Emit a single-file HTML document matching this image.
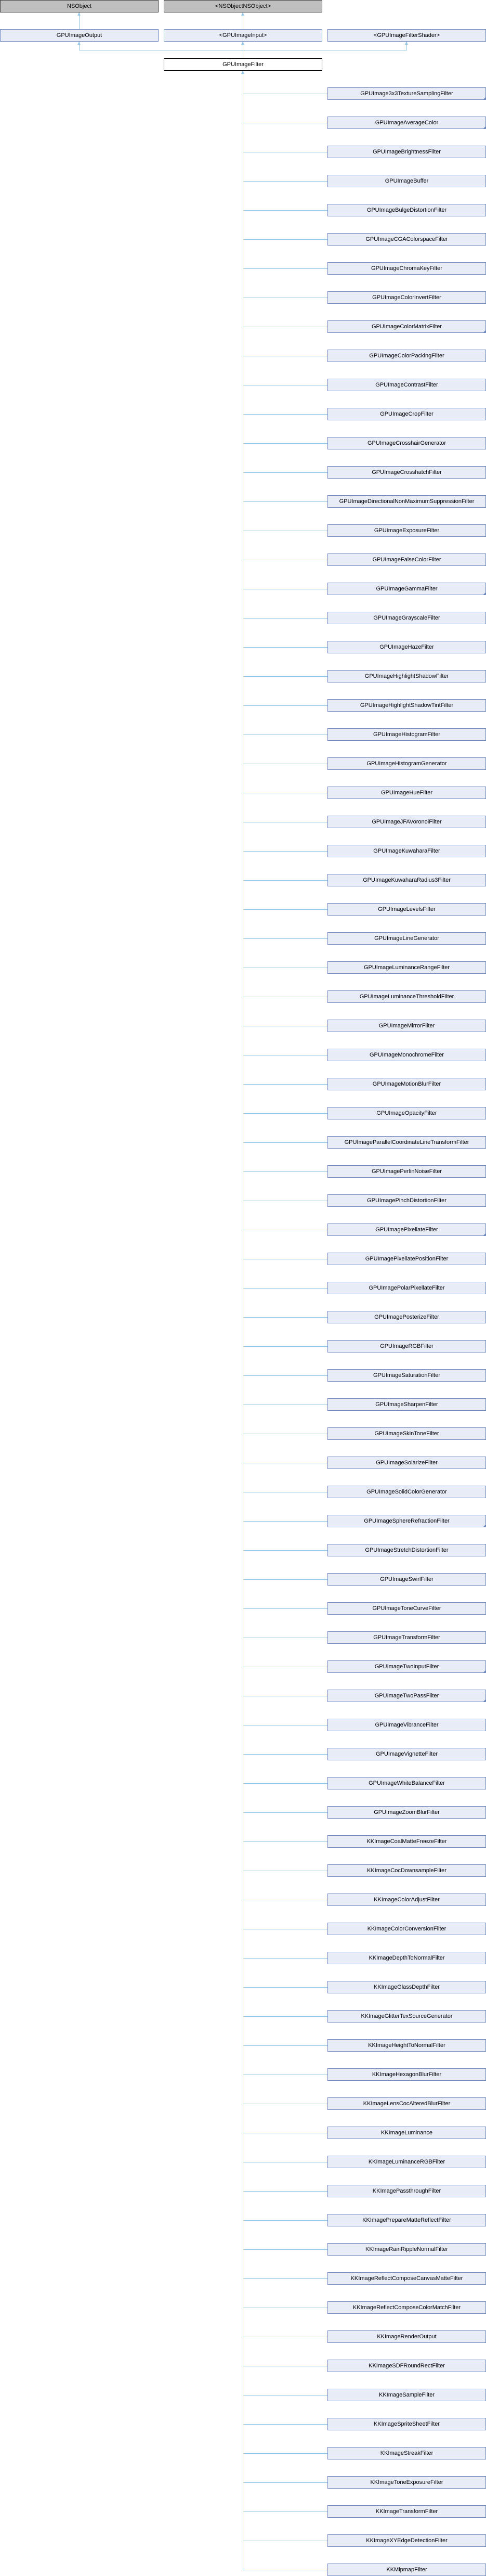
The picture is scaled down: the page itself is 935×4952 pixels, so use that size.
<!DOCTYPE html>
<html><head><meta charset="utf-8"><style>
*{margin:0;padding:0;box-sizing:border-box}
body{width:935px;height:4952px;background:#fff;position:relative;overflow:hidden;font-family:"Liberation Sans",Arial,sans-serif;font-size:11px}
.b{position:absolute;height:24px;line-height:22px;text-align:center;white-space:nowrap;color:#000}
.g{background:#bfbfbf;border:1px solid #404040}
.u{background:#e8ecf6;border:1px solid #7089c0}
.w{background:#fff;border:1px solid #000}
.c{position:absolute;left:630px;width:305px;height:24px;line-height:22px;text-align:center;background:#e8ecf6;border:1px solid #7089c0;white-space:nowrap}
.c::before{content:"";position:absolute;left:-163px;top:11px;width:162px;height:1px;background:#94c6e6}
.f::after{content:"";position:absolute;right:-1px;bottom:-1px;border-left:6px solid transparent;border-bottom:6px solid #7089c0}
.l{position:absolute;background:#94c6e6}
.a{position:absolute;width:0;height:0;border-left:3px solid transparent;border-right:3px solid transparent;border-bottom:6px solid #94c6e6}
</style></head><body>
<div class="b g" style="left:0;top:0;width:305px">NSObject</div>
<div class="b g" style="left:315px;top:0;width:305px">&lt;NSObjectNSObject&gt;</div>
<div class="b u" style="left:0;top:56px;width:305px">GPUImageOutput</div>
<div class="b u" style="left:315px;top:56px;width:305px">&lt;GPUImageInput&gt;</div>
<div class="b u" style="left:630px;top:56px;width:305px">&lt;GPUImageFilterShader&gt;</div>
<div class="b w" style="left:315px;top:112px;width:305px">GPUImageFilter</div>
<div class="l" style="left:152px;top:24px;width:1px;height:32px"></div><div class="a" style="left:149px;top:24px"></div>
<div class="l" style="left:467px;top:24px;width:1px;height:32px"></div><div class="a" style="left:464px;top:24px"></div>
<div class="l" style="left:152px;top:80px;width:1px;height:16px"></div><div class="a" style="left:149px;top:80px"></div>
<div class="l" style="left:782px;top:80px;width:1px;height:16px"></div><div class="a" style="left:779px;top:80px"></div>
<div class="l" style="left:152px;top:96px;width:631px;height:1px"></div>
<div class="l" style="left:467px;top:80px;width:1px;height:32px"></div><div class="a" style="left:464px;top:80px"></div>
<div class="l" style="left:467px;top:136px;width:1px;height:4804px"></div><div class="a" style="left:464px;top:136px"></div>
<div class="c f" style="top:168px">GPUImage3x3TextureSamplingFilter</div>
<div class="c f" style="top:224px">GPUImageAverageColor</div>
<div class="c" style="top:280px">GPUImageBrightnessFilter</div>
<div class="c" style="top:336px">GPUImageBuffer</div>
<div class="c" style="top:392px">GPUImageBulgeDistortionFilter</div>
<div class="c" style="top:448px">GPUImageCGAColorspaceFilter</div>
<div class="c" style="top:504px">GPUImageChromaKeyFilter</div>
<div class="c" style="top:560px">GPUImageColorInvertFilter</div>
<div class="c f" style="top:616px">GPUImageColorMatrixFilter</div>
<div class="c" style="top:672px">GPUImageColorPackingFilter</div>
<div class="c" style="top:728px">GPUImageContrastFilter</div>
<div class="c" style="top:784px">GPUImageCropFilter</div>
<div class="c" style="top:840px">GPUImageCrosshairGenerator</div>
<div class="c" style="top:896px">GPUImageCrosshatchFilter</div>
<div class="c" style="top:952px">GPUImageDirectionalNonMaximumSuppressionFilter</div>
<div class="c" style="top:1008px">GPUImageExposureFilter</div>
<div class="c" style="top:1064px">GPUImageFalseColorFilter</div>
<div class="c f" style="top:1120px">GPUImageGammaFilter</div>
<div class="c" style="top:1176px">GPUImageGrayscaleFilter</div>
<div class="c" style="top:1232px">GPUImageHazeFilter</div>
<div class="c" style="top:1288px">GPUImageHighlightShadowFilter</div>
<div class="c" style="top:1344px">GPUImageHighlightShadowTintFilter</div>
<div class="c" style="top:1400px">GPUImageHistogramFilter</div>
<div class="c" style="top:1456px">GPUImageHistogramGenerator</div>
<div class="c" style="top:1512px">GPUImageHueFilter</div>
<div class="c" style="top:1568px">GPUImageJFAVoronoiFilter</div>
<div class="c" style="top:1624px">GPUImageKuwaharaFilter</div>
<div class="c" style="top:1680px">GPUImageKuwaharaRadius3Filter</div>
<div class="c" style="top:1736px">GPUImageLevelsFilter</div>
<div class="c" style="top:1792px">GPUImageLineGenerator</div>
<div class="c" style="top:1848px">GPUImageLuminanceRangeFilter</div>
<div class="c" style="top:1904px">GPUImageLuminanceThresholdFilter</div>
<div class="c" style="top:1960px">GPUImageMirrorFilter</div>
<div class="c" style="top:2016px">GPUImageMonochromeFilter</div>
<div class="c" style="top:2072px">GPUImageMotionBlurFilter</div>
<div class="c" style="top:2128px">GPUImageOpacityFilter</div>
<div class="c" style="top:2184px">GPUImageParallelCoordinateLineTransformFilter</div>
<div class="c" style="top:2240px">GPUImagePerlinNoiseFilter</div>
<div class="c" style="top:2296px">GPUImagePinchDistortionFilter</div>
<div class="c f" style="top:2352px">GPUImagePixellateFilter</div>
<div class="c" style="top:2408px">GPUImagePixellatePositionFilter</div>
<div class="c" style="top:2464px">GPUImagePolarPixellateFilter</div>
<div class="c" style="top:2520px">GPUImagePosterizeFilter</div>
<div class="c" style="top:2576px">GPUImageRGBFilter</div>
<div class="c" style="top:2632px">GPUImageSaturationFilter</div>
<div class="c" style="top:2688px">GPUImageSharpenFilter</div>
<div class="c" style="top:2744px">GPUImageSkinToneFilter</div>
<div class="c" style="top:2800px">GPUImageSolarizeFilter</div>
<div class="c" style="top:2856px">GPUImageSolidColorGenerator</div>
<div class="c f" style="top:2912px">GPUImageSphereRefractionFilter</div>
<div class="c" style="top:2968px">GPUImageStretchDistortionFilter</div>
<div class="c" style="top:3024px">GPUImageSwirlFilter</div>
<div class="c" style="top:3080px">GPUImageToneCurveFilter</div>
<div class="c" style="top:3136px">GPUImageTransformFilter</div>
<div class="c f" style="top:3192px">GPUImageTwoInputFilter</div>
<div class="c f" style="top:3248px">GPUImageTwoPassFilter</div>
<div class="c" style="top:3304px">GPUImageVibranceFilter</div>
<div class="c" style="top:3360px">GPUImageVignetteFilter</div>
<div class="c" style="top:3416px">GPUImageWhiteBalanceFilter</div>
<div class="c" style="top:3472px">GPUImageZoomBlurFilter</div>
<div class="c" style="top:3528px">KKImageCoalMatteFreezeFilter</div>
<div class="c" style="top:3584px">KKImageCocDownsampleFilter</div>
<div class="c" style="top:3640px">KKImageColorAdjustFilter</div>
<div class="c" style="top:3696px">KKImageColorConversionFilter</div>
<div class="c" style="top:3752px">KKImageDepthToNormalFilter</div>
<div class="c" style="top:3808px">KKImageGlassDepthFilter</div>
<div class="c" style="top:3864px">KKImageGlitterTexSourceGenerator</div>
<div class="c" style="top:3920px">KKImageHeightToNormalFilter</div>
<div class="c" style="top:3976px">KKImageHexagonBlurFilter</div>
<div class="c" style="top:4032px">KKImageLensCocAlteredBlurFilter</div>
<div class="c" style="top:4088px">KKImageLuminance</div>
<div class="c" style="top:4144px">KKImageLuminanceRGBFilter</div>
<div class="c" style="top:4200px">KKImagePassthroughFilter</div>
<div class="c" style="top:4256px">KKImagePrepareMatteReflectFilter</div>
<div class="c" style="top:4312px">KKImageRainRippleNormalFilter</div>
<div class="c" style="top:4368px">KKImageReflectComposeCanvasMatteFilter</div>
<div class="c" style="top:4424px">KKImageReflectComposeColorMatchFilter</div>
<div class="c" style="top:4480px">KKImageRenderOutput</div>
<div class="c" style="top:4536px">KKImageSDFRoundRectFilter</div>
<div class="c" style="top:4592px">KKImageSampleFilter</div>
<div class="c" style="top:4648px">KKImageSpriteSheetFilter</div>
<div class="c" style="top:4704px">KKImageStreakFilter</div>
<div class="c" style="top:4760px">KKImageToneExposureFilter</div>
<div class="c" style="top:4816px">KKImageTransformFilter</div>
<div class="c" style="top:4872px">KKImageXYEdgeDetectionFilter</div>
<div class="c" style="top:4928px">KKMipmapFilter</div>
</body></html>
